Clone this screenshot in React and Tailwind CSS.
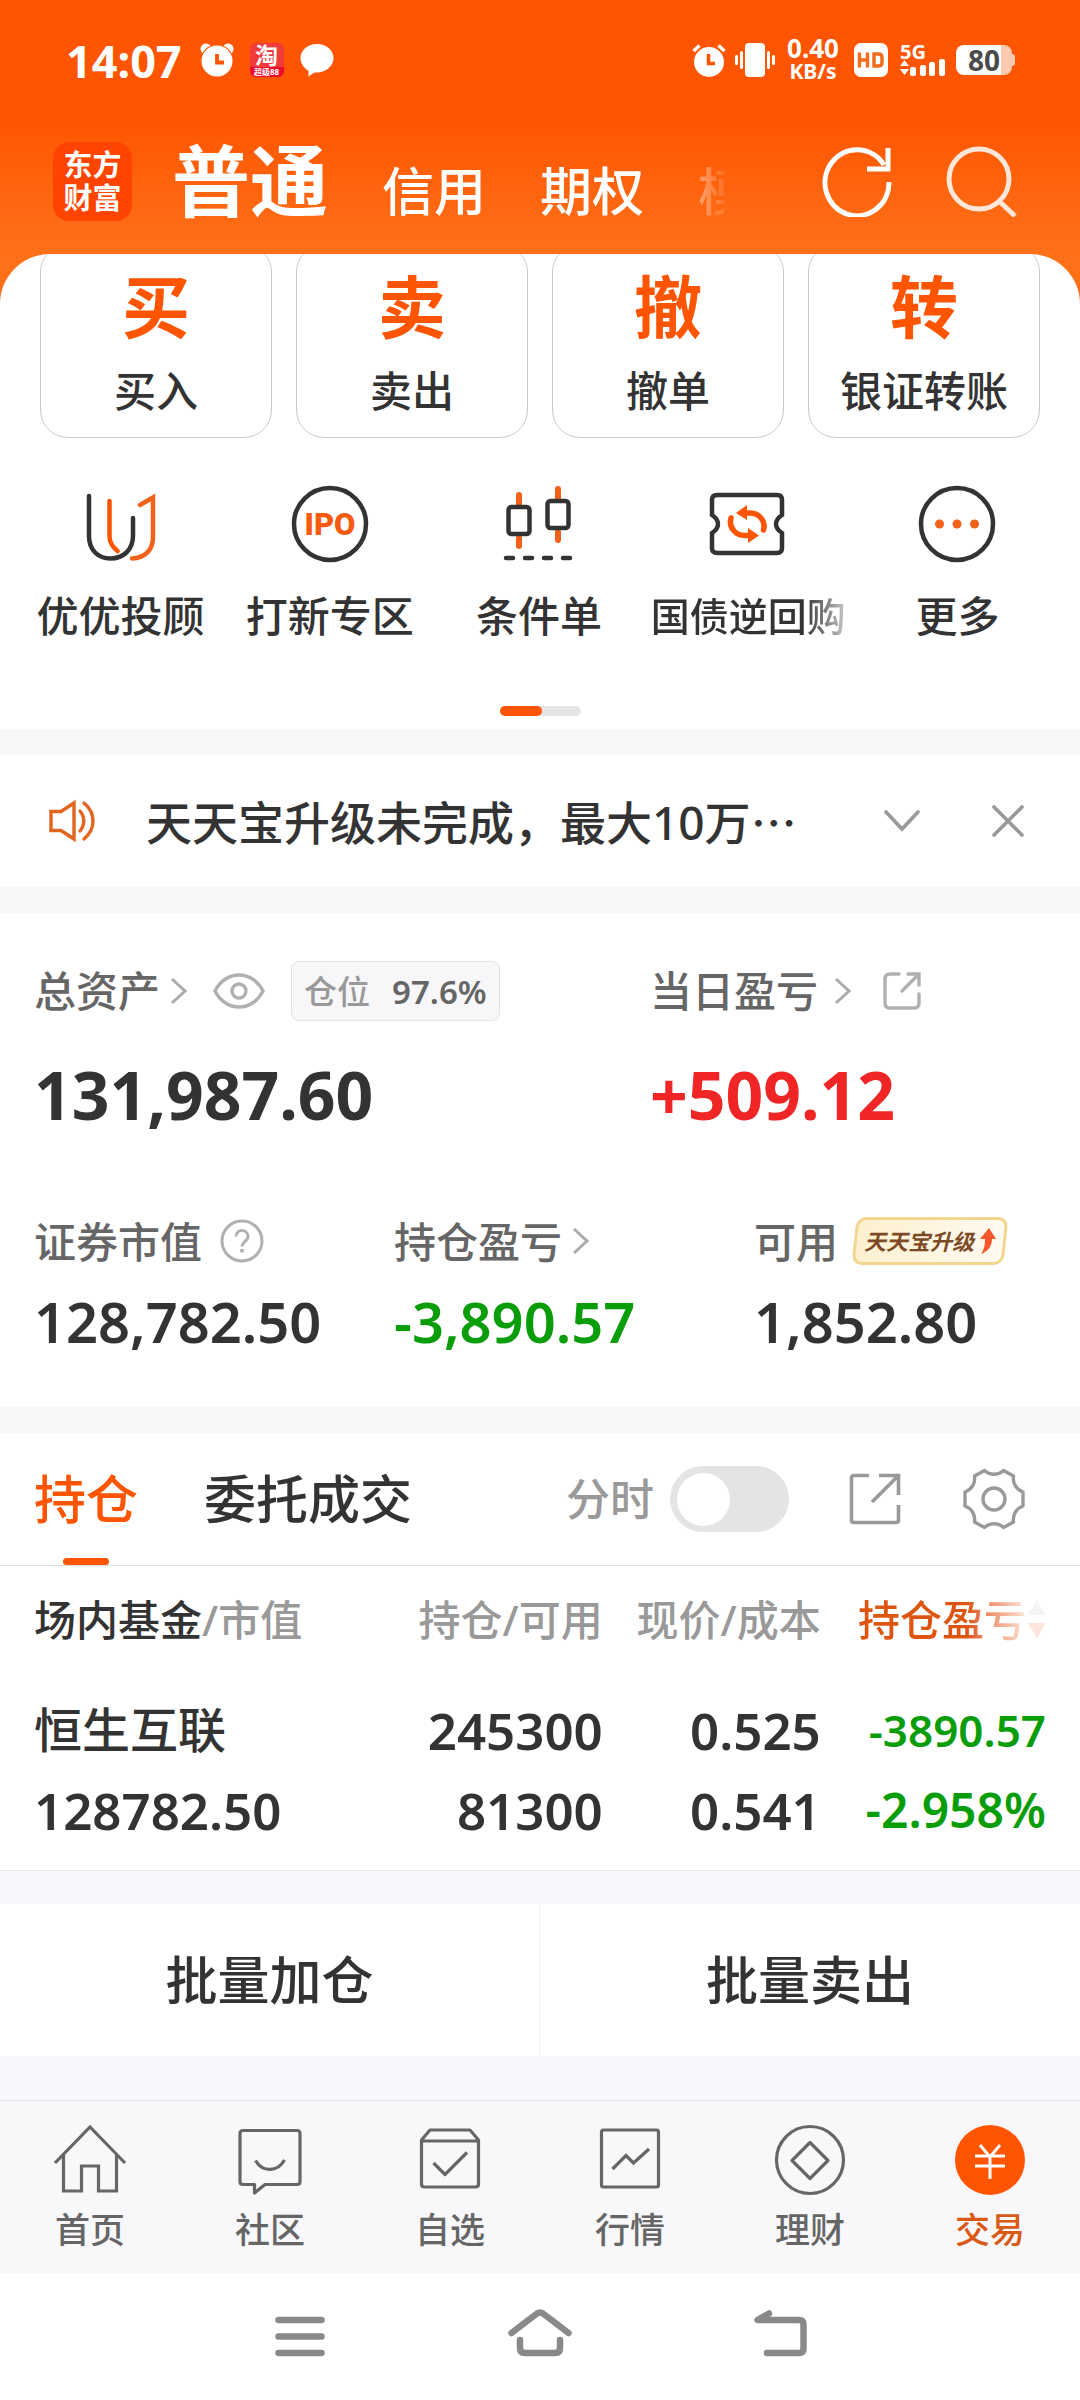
import React, { useState } from "react";

const ACTIONS = [
  { glyph: "买", label: "买入" },
  { glyph: "卖", label: "卖出" },
  { glyph: "撤", label: "撤单" },
  { glyph: "转", label: "银证转账" },
];

function AlarmIcon({ className }) {
  return (
    <svg className={className} viewBox="0 0 34 34" fill="none">
      <path d="M1.500 8 7.500 2.500M32.500 8 26.500 2.500" stroke="#fff" strokeWidth="3.500" />
      <circle cx="17" cy="19" r="15" fill="#fff" />
      <path d="M16.500 11v9.500H23" stroke="#ff5500" strokeWidth="3.500" />
    </svg>
  );
}

function ClockIcon({ className }) {
  return (
    <svg className={className} viewBox="0 0 34 34" fill="none">
      <circle cx="6" cy="6" r="5.500" fill="#fff" />
      <circle cx="28" cy="6" r="5.500" fill="#fff" />
      <circle cx="17" cy="18" r="16.500" fill="#ff5500" />
      <circle cx="17" cy="18" r="15.500" fill="#fff" />
      <path d="M17 11v8.500h7" stroke="#ff5500" strokeWidth="3.800" />
    </svg>
  );
}

function StatusBar() {
  return (
    <div className="flex h-[120px] items-center justify-between pr-[65px] pl-[66px] text-white">
      <div className="flex items-center">
        <span className="text-[45px] leading-none font-bold">14:07</span>
        <ClockIcon className="ml-[18px] size-[34px]" />
        <span className="ml-4 flex size-[34px] flex-col items-center overflow-hidden rounded-md bg-[#f03a3c] leading-none">
          <span className="text-[23px] leading-[24px] font-bold">淘</span>
          <span className="w-full bg-[#ee0a2c] text-center text-[8px] leading-[10px] font-bold">超级88</span>
        </span>
        <svg className="ml-4 size-[34px]" viewBox="0 0 34 34">
          <path d="M17 1c9 0 16.500 6 16.500 14S26 29.500 17 29.500c-1 0-2 0-3 .3L8.500 33.500v-5.800C4 25.200.5 20.700.5 15 .5 7 8 1 17 1z" fill="#fff" />
        </svg>
      </div>
      <div className="flex items-center">
        <AlarmIcon className="size-[34px]" />
        <svg className="ml-2 h-[34px] w-[42px]" viewBox="0 0 42 34" fill="#fff">
          <rect x="11" y="0" width="20" height="34" rx="4" />
          <rect x="6" y="8" width="3" height="18" rx="1.500" />
          <rect x="1" y="12" width="3" height="10" rx="1.500" />
          <rect x="33" y="8" width="3" height="18" rx="1.500" />
          <rect x="38" y="12" width="3" height="10" rx="1.500" />
        </svg>
        <div className="ml-2 flex w-[58px] flex-col items-center font-bold">
          <span className="text-[26px] leading-[22px]">0.40</span>
          <span className="text-[21px] leading-[24px]">KB/s</span>
        </div>
        <svg className="ml-3 size-[34px]" viewBox="0 0 34 34" fill="none">
          <rect width="34" height="34" rx="7" fill="#fff" />
          <path d="M5.500 9.500v15M13.500 9.500v15M5.500 17h8M20 11h4.500q3.500 0 3.500 3.500v5q0 3.500-3.500 3.500H20z" stroke="#f26a1b" strokeWidth="3.400" />
        </svg>
        <div className="ml-3 flex h-[32px] w-[46px] flex-col">
          <span className="text-[20px] leading-[15px] font-bold">5G</span>
          <svg className="h-[17px] w-[46px]" viewBox="0 0 46 17" fill="#fff">
            <path d="M4.500 1 9 7H0zM4.500 16 0 10h9z" />
            <rect x="10" y="8" width="6" height="9" rx="2" />
            <rect x="20" y="6" width="6" height="11" rx="2" />
            <rect x="29" y="3" width="6" height="14" rx="2" />
            <rect x="39" y="0" width="6" height="17" rx="2" />
          </svg>
        </div>
        <div className="ml-[10px] flex items-center">
          <span className="flex h-[30px] w-[56px] items-center justify-center rounded-lg bg-linear-to-r from-white from-80% to-[#ffc9b0] to-80% text-[28px] leading-none font-bold text-[#4a4a4a]">
            80
          </span>
          <span className="h-[12px] w-[3px] rounded-r bg-[#ffc9b0]" />
        </div>
      </div>
    </div>
  );
}

function Header() {
  return (
    <header className="flex h-[134px] items-center bg-linear-to-b from-[#ff5500] to-[#ff7018] pr-[63px] pb-3 pl-[53px] text-white">
      <div className="flex size-[79px] shrink-0 flex-col items-center justify-center rounded-2xl bg-[#ff4400] text-[29px] leading-[33px] font-bold">
        <span>东方</span>
        <span>财富</span>
      </div>
      <nav className="ml-10 flex min-w-0 flex-1 items-baseline gap-[54px] overflow-hidden whitespace-nowrap">
        <a href="#normal" className="text-[78px] leading-[100px] font-bold">普通</a>
        <a href="#credit" className="text-[52px] font-medium">信用</a>
        <a href="#option" className="text-[52px] font-medium">期权</a>
        <span className="w-[26px] overflow-hidden bg-linear-to-r from-white/40 to-white/10 bg-clip-text text-[52px] font-medium text-transparent">模</span>
      </nav>
      <button aria-label="刷新" className="shrink-0">
        <svg className="size-[72px]" viewBox="0 0 72 72" fill="none" stroke="#fff" strokeWidth="5">
          <path d="M68 37A32 33 0 1 1 63 20" />
          <path d="M67 3v21H46" />
        </svg>
      </button>
      <button aria-label="搜索" className="ml-[52px] shrink-0">
        <svg className="size-[72px]" viewBox="0 0 72 72" fill="none" stroke="#ffe6d6" strokeWidth="5">
          <circle cx="34" cy="34" r="30" />
          <path d="M54 56 70 71" />
        </svg>
      </button>
    </header>
  );
}

function Actions() {
  return (
    <div className="grid grid-cols-4 gap-6 px-10">
      {ACTIONS.map((a) => (
        <button key={a.label} className="-mt-[10px] flex h-[194px] flex-col items-center rounded-[28px] border border-[#c9c9c9] bg-white pt-6">
          <span className="text-[68px] leading-[76px] font-bold text-[#ff5500]">{a.glyph}</span>
          <span className="mt-4 text-[42px] leading-[60px] font-medium text-[#333]">{a.label}</span>
        </button>
      ))}
    </div>
  );
}

const shortcutIcons = {
  advisor: (
    <svg className="size-[80px]" viewBox="0 0 80 80" fill="none" strokeWidth="4.500" strokeLinecap="round">
      <path d="M8 12v40c0 14 9 22.500 21.500 22.500S52 66 52 52V34" stroke="#333" />
      <path d="M28.500 17v35c0 6 3 11 8 15" stroke="#ff5500" />
      <path d="M59 21 72 13.500V53c0 13-8 21-21 21.500" stroke="#f2611a" />
    </svg>
  ),
  ipo: (
    <svg className="size-[80px]" viewBox="0 0 80 80" fill="none">
      <circle cx="40" cy="40" r="36" stroke="#333" strokeWidth="4.500" />
      <text x="40" y="51" textAnchor="middle" className="fill-[#f85a10] text-[31px] font-black" fontFamily="Roboto">IPO</text>
    </svg>
  ),
  condition: (
    <svg className="size-[80px]" viewBox="0 0 80 80" fill="none" strokeLinecap="round">
      <path d="M20 11v10M20 54v8M59 5v10M59 48v8" stroke="#f2611a" strokeWidth="6" />
      <rect x="9.500" y="23" width="21" height="27" rx="3" stroke="#333" strokeWidth="4.500" />
      <rect x="48.500" y="17" width="21" height="27" rx="3" stroke="#333" strokeWidth="4.500" />
      <path d="M7 74h7M26 74h7M45 74h7M64 74h7" stroke="#333" strokeWidth="4.500" />
    </svg>
  ),
  repo: (
    <svg className="size-[80px]" viewBox="0 0 80 80" fill="none">
      <path d="M9 11h60q5 0 5 5v15q-6 4-6 9t6 9v15q0 5-5 5H9q-5 0-5-5V49q6-4 6-9t-6-9V16q0-5 5-5z" stroke="#333" strokeWidth="4.500" />
      <path d="M34 29h8c9 0 16 8 13.500 17M45 51.500h-8C27 51.500 20.500 43 23 34" stroke="#ff5500" strokeWidth="5.500" strokeLinecap="round" />
      <path d="M28 29 39 21v15zM51 51.500 40 44v15z" fill="#ff5500" />
    </svg>
  ),
  more: (
    <svg className="size-[80px]" viewBox="0 0 80 80" fill="none">
      <circle cx="40" cy="40" r="36" stroke="#333" strokeWidth="4.500" />
      <g fill="#f2611a">
        <circle cx="22.500" cy="40" r="4.500" />
        <circle cx="40" cy="40" r="4.500" />
        <circle cx="57.500" cy="40" r="4.500" />
      </g>
    </svg>
  ),
};

function Shortcuts() {
  const items = [
    ["advisor", "优优投顾"],
    ["ipo", "打新专区"],
    ["condition", "条件单"],
    ["repo", "国债逆回购"],
    ["more", "更多"],
  ];
  return (
    <div className="grid grid-cols-5 pt-[46px] pr-[18px] pl-4">
      {items.map(([id, label]) => (
        <button key={id} className="flex flex-col items-center whitespace-nowrap text-[#333]">
          {shortcutIcons[id]}
          {id === "repo" ? (
            <span className="mt-[22px] bg-linear-to-r from-[#333] from-78% to-[#ccc] bg-clip-text text-[39px] leading-[60px] font-medium text-transparent">{label}</span>
          ) : (
            <span className="mt-[22px] text-[42px] leading-[60px] font-medium">{label}</span>
          )}
        </button>
      ))}
    </div>
  );
}

function Notice() {
  return (
    <section className="flex h-[132px] items-center bg-white pr-[56px] pl-[48px]">
      <svg className="h-[44px] w-[50px] shrink-0" viewBox="0 0 50 44" fill="none" stroke="#e2641e" strokeWidth="3.400">
        <path d="M3 12.500h10L26 4v36L13 31.500H3z" />
        <path d="M32 12c5 6 5 14 0 20M36 4c12 10 12 26 0 36" strokeLinecap="round" />
      </svg>
      <p className="ml-12 flex-1 text-[46px] font-medium whitespace-nowrap text-[#333]">
        天天宝升级未完成，最大10万<span className="font-['Noto_Sans_CJK_SC',sans-serif]">⋯</span>
      </p>
      <button aria-label="展开">
        <svg className="h-[22px] w-[36px]" viewBox="0 0 36 22" fill="none" stroke="#999" strokeWidth="3.600" strokeLinecap="round">
          <path d="M2 2l16 17L34 2" />
        </svg>
      </button>
      <button aria-label="关闭" className="ml-[72px]">
        <svg className="size-[32px]" viewBox="0 0 32 32" fill="none" stroke="#999" strokeWidth="3.600" strokeLinecap="round">
          <path d="M2 2l28 28M30 2L2 30" />
        </svg>
      </button>
    </section>
  );
}

function Chevron({ className }) {
  return (
    <svg className={className} viewBox="0 0 18 30" fill="none" stroke="#aaa" strokeWidth="3">
      <path d="M2 3l13 12L2 27" />
    </svg>
  );
}

function ShareIcon({ className, stroke }) {
  return (
    <svg className={className} viewBox="0 0 52 52" fill="none" stroke={stroke} strokeWidth="3.600">
      <path d="M20 2.500H5Q2.500 2.500 2.500 5v42q0 2.500 2.500 2.500h42q2.500 0 2.500-2.500V32" />
      <path d="M30 2.500h19.500V22M49 3 23 29" />
    </svg>
  );
}

function RoundShareIcon({ className }) {
  return (
    <svg className={className} viewBox="0 0 40 40" fill="none" stroke="#b0b0b0" strokeWidth="3.400" strokeLinecap="round">
      <path d="M17 3H8Q3 3 3 8v24q0 5 5 5h24q5 0 5-5v-9" />
      <path d="M26 3h11v11M36 4 20 20" />
    </svg>
  );
}

function Assets() {
  return (
    <section className="bg-white pt-[43px] pb-[50px] pl-[34px] text-[#333]">
      <div className="grid grid-cols-[616fr_430fr]">
        <div>
          <div className="flex h-[70px] items-center">
            <a href="#assets" className="flex items-center text-[42px] leading-[60px] font-medium text-[#666]">
              总资产
              <Chevron className="ml-[10px] h-[30px] w-[18px]" />
            </a>
            <button aria-label="隐藏金额" className="ml-[25px]">
              <svg className="h-[36px] w-[52px]" viewBox="0 0 52 36" fill="none" stroke="#b0b0b0" strokeWidth="3.400">
                <path d="M2 18C7 8 16 2 26 2s19 6 24 16c-5 10-14 16-24 16S7 28 2 18z" />
                <circle cx="26" cy="18" r="7" />
              </svg>
            </button>
            <span className="ml-[26px] flex h-[60px] items-center gap-[22px] rounded-lg border border-[#e3e3e6] bg-[#f7f7fa] px-3 text-[33px] leading-none font-medium">
              <span className="text-[#999]">仓位</span>
              <span className="font-semibold text-[#666]">97.6%</span>
            </span>
          </div>
          <div className="mt-[28px] text-[66px] leading-[80px] font-bold">131,987.60</div>
        </div>
        <div>
          <div className="flex h-[70px] items-center">
            <a href="#today" className="flex items-center text-[42px] leading-[60px] font-medium text-[#666]">
              当日盈亏
              <Chevron className="ml-4 h-[30px] w-[18px]" />
            </a>
            <button aria-label="分享" className="ml-[30px]">
              <RoundShareIcon className="size-[40px]" />
            </button>
          </div>
          <div className="mt-[28px] text-[66px] leading-[80px] font-bold text-[#f02525]">+509.12</div>
        </div>
      </div>
      <div className="mt-[77px] grid grid-cols-[360fr_360fr_326fr]">
        <div>
          <div className="flex h-[60px] items-center text-[42px] font-medium text-[#666]">
            证券市值
            <button aria-label="说明" className="ml-[18px]">
              <svg className="size-[44px]" viewBox="0 0 44 44" fill="none" stroke="#b0b0b0" strokeWidth="3">
                <circle cx="22" cy="22" r="20" />
                <path d="M16 17.500c0-8 12-8 12 0 0 5-6 5-6 10" />
                <path d="M22 30v3.500" strokeWidth="3.500" />
              </svg>
            </button>
          </div>
          <div className="mt-[14px] text-[56px] leading-[72px] font-semibold">128,782.50</div>
        </div>
        <div>
          <a href="#profit" className="flex h-[60px] items-center text-[42px] font-medium text-[#666]">
            持仓盈亏
            <Chevron className="ml-[10px] h-[30px] w-[18px]" />
          </a>
          <div className="mt-[14px] text-[56px] leading-[72px] font-semibold text-[#0a9d0a]">-3,890.57</div>
        </div>
        <div>
          <div className="flex h-[60px] items-center text-[42px] font-medium text-[#666]">
            可用
            <span className="relative ml-4 flex">
              <span className="absolute inset-0 -skew-x-6 rounded-[10px] border-[3px] border-[#f3d68e] bg-linear-to-r from-[#fdf0d0] to-[#fffaf0]" />
              <button className="relative flex h-[48px] items-center px-[10px] text-[22px] leading-none font-bold text-[#7d4a26] italic">
                天天宝升级
                <svg className="ml-1 h-[26px] w-[18px]" viewBox="0 0 18 26">
                  <path d="M11 0l7 11h-4c0 6-3 12-11 15 3-4 4-9 4-15H2z" fill="#f4582a" />
                </svg>
              </button>
            </span>
          </div>
          <div className="mt-[14px] text-[56px] leading-[72px] font-semibold">1,852.80</div>
        </div>
      </div>
    </section>
  );
}

function Holdings() {
  const [timeline, setTimeline] = useState(false);
  return (
    <section className="border-b border-[#e6e6e6] bg-white text-[#333]">
      <div className="flex h-[133px] items-stretch border-b border-[#dcdcdc] pr-[55px] pl-[34px]">
        <button className="relative text-[52px] leading-none font-medium text-[#ff5500]">
          持仓
          <span className="absolute bottom-0 left-1/2 h-[7px] w-[46px] -translate-x-1/2 rounded-full bg-[#ff5500]" />
        </button>
        <button className="ml-[66px] text-[52px] leading-none font-medium">委托成交</button>
        <div className="ml-auto flex items-center">
          <label className="flex items-center text-[44px] leading-none font-medium text-[#999]">
            分时
            <input type="checkbox" className="peer sr-only" checked={timeline} onChange={(e) => setTimeline(e.target.checked)} />
            <span className="ml-4 flex h-[66px] w-[119px] items-center rounded-full bg-[#e4e4e6] px-[7px] peer-checked:justify-end peer-checked:bg-[#ff5500]">
              <span className="size-[53px] rounded-full bg-white" />
            </span>
          </label>
          <button aria-label="分享持仓" className="ml-[60px]">
            <ShareIcon className="size-[52px]" stroke="#999" />
          </button>
          <button aria-label="设置" className="ml-[62px]">
            <svg className="size-[62px]" viewBox="0 0 62 62" fill="none" stroke="#999" strokeWidth="3.400" strokeLinejoin="round">
              <path d="M21.500 2.500C27 7.500 35 7.500 40.500 2.500L50.500 8C49.500 15 53 21.500 60 24V38C53 40.500 49.500 47 50.500 54L40.500 59.500C35 54.500 27 54.500 21.500 59.500L11.500 54C12.500 47 9 40.500 2 38V24C9 21.500 12.500 15 11.500 8Z" />
              <circle cx="31" cy="31" r="11" />
            </svg>
          </button>
        </div>
      </div>
      <table className="w-full table-fixed">
        <colgroup>
          <col className="w-[34%]" />
          <col className="w-[22%]" />
          <col className="w-[20%]" />
          <col className="w-[24%]" />
        </colgroup>
        <thead>
          <tr className="h-[106px] text-[42px] whitespace-nowrap text-[#999]">
            <th className="pl-[34px] text-left font-medium">
              <span className="text-[#333]">场内基金</span>/市值
            </th>
            <th className="pr-[2px] text-right font-medium">持仓/可用</th>
            <th className="text-right font-medium">现价/成本</th>
            <th className="pr-[34px] font-medium">
              <span className="flex items-center justify-end">
                <span className="bg-linear-to-r from-[#dd5510] from-65% to-[#fbe3d8] bg-clip-text text-transparent">持仓盈亏</span>
                <svg className="ml-[2px] h-[38px] w-[18px]" viewBox="0 0 18 38">
                  <path d="M9 0l9 15H0z" fill="#f5f5f5" />
                  <path d="M9 38l9-15H0z" fill="#fde5db" />
                </svg>
              </span>
            </th>
          </tr>
        </thead>
        <tbody>
          <tr className="h-[198px] text-[51px] leading-[80px] font-semibold whitespace-nowrap">
            <td className="pb-[2px] pl-[34px]">
              <div className="text-[48px] font-medium">恒生互联</div>
              <div>128782.50</div>
            </td>
            <td className="pr-[2px] pb-[2px] text-right">
              <div>245300</div>
              <div>81300</div>
            </td>
            <td className="pb-[2px] text-right">
              <div>0.525</div>
              <div>0.541</div>
            </td>
            <td className="pr-[34px] pb-[2px] text-right text-[#0a9d0a]">
              <div className="text-[44px]">-3890.57</div>
              <div className="text-[48px]">-2.958%</div>
            </td>
          </tr>
        </tbody>
      </table>
    </section>
  );
}

const tabIcons = {
  home: (
    <svg className="size-[74px]" viewBox="0 0 74 74" fill="none" stroke="#666" strokeWidth="3.200">
      <path d="M2 40 37 4l35 36M10.500 32v36h18V43h17v25h18V32" />
    </svg>
  ),
  community: (
    <svg className="size-[74px]" viewBox="0 0 74 74" fill="none" stroke="#666" strokeWidth="3.200" strokeLinejoin="round">
      <path d="M10 7.500h54q3 0 3 3v48q0 3-3 3H32l-10.500 8.500v-8.500H10q-3 0-3-3v-48q0-3 3-3z" />
      <path d="M22.500 37.500c7 12 22 12 29-.5" />
    </svg>
  ),
  watchlist: (
    <svg className="size-[74px]" viewBox="0 0 74 74" fill="none" stroke="#666" strokeWidth="3.200" strokeLinejoin="round">
      <path d="M8.500 17 17 7h40l8.500 10v44q0 3-3 3h-51q-3 0-3-3zM8.500 18h57" />
      <path d="M20.500 40 32 51.500 54 29.500" />
    </svg>
  ),
  market: (
    <svg className="size-[74px]" viewBox="0 0 74 74" fill="none" stroke="#666" strokeWidth="3.200">
      <rect x="8.500" y="7" width="57" height="57" rx="2" />
      <path d="M19.500 46 33 32.500l7.500 7.500L56 26" />
    </svg>
  ),
  wealth: (
    <svg className="size-[74px]" viewBox="0 0 74 74" fill="none" stroke="#666" strokeWidth="3.200" strokeLinejoin="round">
      <circle cx="37" cy="37" r="33.500" />
      <path d="M37 19.500 55 37.500 37 55.500 19 37.500z" />
    </svg>
  ),
  trade: (
    <svg className="size-[74px]" viewBox="0 0 74 74" fill="none" stroke="#fff" strokeWidth="3">
      <circle cx="37" cy="37" r="35" fill="#ff5500" stroke="none" />
      <path d="M27 22l10 12 10-12M22 33h30M22 43h30M37 34v22" />
    </svg>
  ),
};

function TabBar() {
  const tabs = [
    ["home", "首页"],
    ["community", "社区"],
    ["watchlist", "自选"],
    ["market", "行情"],
    ["wealth", "理财"],
    ["trade", "交易"],
  ];
  return (
    <nav className="grid h-[173px] grid-cols-6 border-t border-[#e2e2e4] bg-[#f8f8fb] text-[35px] leading-[48px] font-medium text-[#666]">
      {tabs.map(([id, label]) => (
        <a key={id} href={"#" + id} className="flex flex-col items-center pt-[22px]">
          {tabIcons[id]}
          <span className={id === "trade" ? "mt-[9px] text-[#d95a14]" : "mt-[9px]"}>{label}</span>
        </a>
      ))}
    </nav>
  );
}

function SystemNav() {
  return (
    <div className="flex h-[126px] items-center justify-center gap-[172px]">
      <button aria-label="最近任务">
        <svg className="size-[68px]" viewBox="0 0 68 68" fill="none" stroke="#898989" strokeWidth="6.500" strokeLinecap="round">
          <path d="M12.500 18h43M12.500 34.500h43M12.500 51h43" />
        </svg>
      </button>
      <button aria-label="主页">
        <svg className="size-[68px]" viewBox="0 0 68 68" fill="none" stroke="#898989" strokeWidth="6.500" strokeLinecap="round" strokeLinejoin="round">
          <path d="M5.500 31 31 11.500q3-2 6 0L62.500 31M14 38v8q0 5 5 5h30q5 0 5-5v-8" />
        </svg>
      </button>
      <button aria-label="返回">
        <svg className="size-[68px]" viewBox="0 0 68 68" fill="none" stroke="#898989" strokeWidth="6.500" strokeLinecap="round" strokeLinejoin="round">
          <path d="M23 11.500 11.500 18H53q4.500 0 4.500 4.500v24q0 4.500-4.500 4.500H21" />
        </svg>
      </button>
    </div>
  );
}

export default function App() {
  return (
    <div className="min-h-screen bg-white font-['Noto_Sans','Noto_Sans_CJK_SC',sans-serif]">
      <div className="bg-[#ff5500]">
        <StatusBar />
        <Header />
      </div>
      <div className="bg-[#ff7018]">
        <section className="overflow-hidden rounded-t-[50px] bg-white">
          <Actions />
          <Shortcuts />
          <div className="mx-auto mt-[60px] mb-[13px] flex h-[10px] w-[81px] rounded-full bg-[#e5e5e5]">
            <span className="w-[42px] rounded-full bg-[#ff5500]" />
          </div>
        </section>
      </div>
      <main className="flex flex-col gap-[26px] bg-[#f7f7fa] pt-[26px]">
        <Notice />
        <Assets />
        <Holdings />
      </main>
      <div className="bg-[#f6f8fb] pt-[33px] pb-[44px]">
        <div className="grid h-[152px] grid-cols-2 divide-x divide-[#f0f0f2] bg-white text-[52px] font-medium text-[#333]">
          <button>批量加仓</button>
          <button>批量卖出</button>
        </div>
      </div>
      <TabBar />
      <SystemNav />
    </div>
  );
}
